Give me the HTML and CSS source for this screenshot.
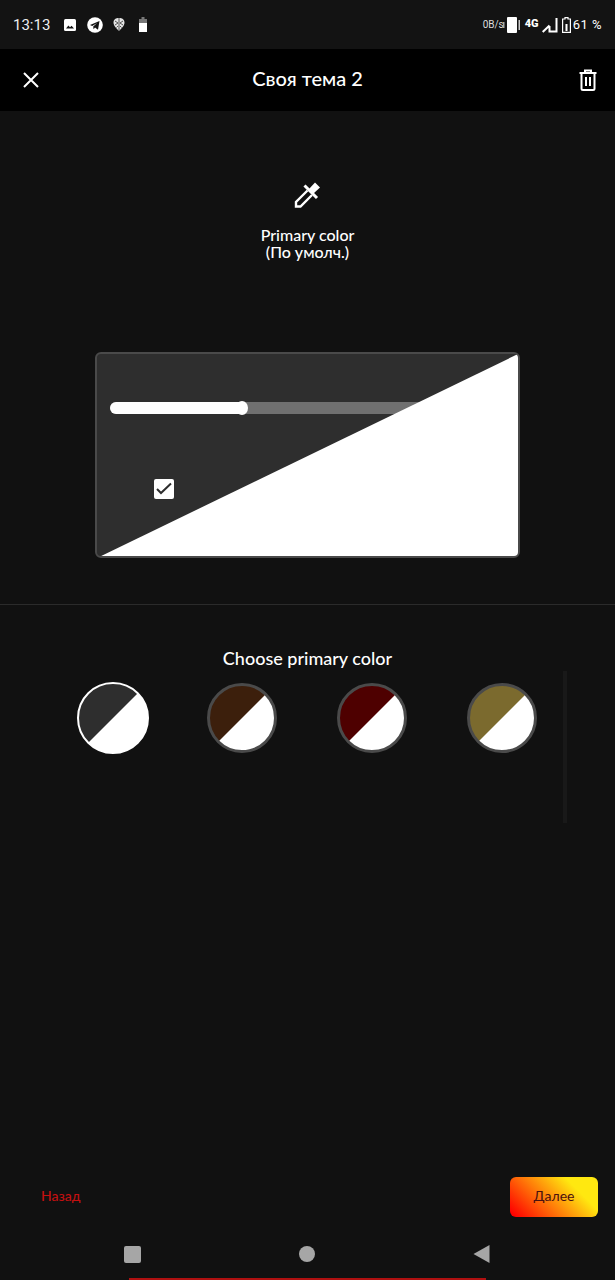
FILE: index.html
```html
<!DOCTYPE html>
<html lang="en">
<head>
  <meta charset="UTF-8" />
  <title>Своя тема 2</title>
  <meta name="viewport" content="width=device-width, initial-scale=1" />
  <link rel="stylesheet" href="styles.css">
</head>
<body>
  <div class="statusbar">
    <span class="clock">13:13</span>
    <div class="status-left">
      <svg width="14" height="14" viewBox="0 0 14 14"><rect x="1" y="1" width="12" height="12" rx="1.500" fill="#fff"/><path d="M3 10.500l2.400-3 1.600 1.800 1.600-1.600 2.400 2.800z" fill="#131313"/></svg>
      <svg width="16" height="16" viewBox="0 0 16 16"><circle cx="8" cy="8" r="7.800" fill="#fff"/><path d="M3 8l9.500-4-1.500 8.800-3-2.200-1.400 1.600-.4-2.800 4-3.400-5 3z" fill="#131313"/></svg>
      <svg width="12" height="15" viewBox="0 0 12 15"><path d="M6 1c3 0 5.500 1.400 5.500 4.500 0 3.500-3.500 6.500-5.500 8.500-2-2-5.500-5-5.500-8.500C.5 2.400 3 1 6 1z" fill="#e4e4e4"/><path d="M6 1v13M2 4l3 2-3 2M10 4L7 6l3 2M3.500 10.500L5 9M8.500 10.500L7 9" stroke="#444" stroke-width=".9" fill="none"/></svg>
      <svg class="batt-small" width="8" height="15" viewBox="0 0 8 15"><rect x="2.500" y="0" width="3" height="2" fill="#777"/><rect x="0" y="2" width="8" height="4" fill="#777"/><rect x="0" y="6" width="8" height="9" fill="#fff"/></svg>
    </div>
    <div class="status-right">
      <span class="speed">0B/s</span>
      <svg class="vibrate" width="19" height="16" viewBox="0 0 19 16"><rect x="5" y="0" width="10" height="16" rx="1" fill="#fff"/><rect x="1" y="5" width="1.500" height="6" fill="#aaa"/><rect x="16.500" y="3" width="1.500" height="10" fill="#ccc"/></svg>
      <span class="lte">4G</span>
      <svg class="signal" width="16" height="15" viewBox="0 0 16 15"><path d="M.7 14L7.500 7.500M14.500 0v13.500H7.500V8" stroke="#fff" stroke-width="2" fill="none"/></svg>
      <svg class="batt" width="9" height="16" viewBox="0 0 9 16"><path d="M3 .6h3v1.400h2.400v13.400H.6V2H3z" stroke="#fff" stroke-width="1.200" fill="none"/><rect x="3.500" y="7" width="2" height="7" fill="#fff"/></svg>
      <span class="battery">61 %</span>
    </div>
  </div>

  <header class="topbar">
    <svg class="icon" width="24" height="24" viewBox="0 0 24 24"><path d="M5 5l14 14M19 5L5 19" stroke="#fff" stroke-width="2" fill="none"/></svg>
    <h1>Своя тема 2</h1>
    <svg class="icon" width="24" height="24" viewBox="0 0 24 24"><path d="M3.500 5h17M9 5V2.500h6V5M5.500 5v15.500q0 1.500 1.500 1.500h10q1.500 0 1.500-1.500V5M10 9v9M14 9v9" stroke="#fff" stroke-width="2" fill="none"/></svg>
  </header>

  <section class="picker-head">
    <svg width="27" height="27" viewBox="0 0 27 27"><path d="M10.500 4.500L23 17" stroke="#fff" stroke-width="3" fill="none"/><path d="M15 8l6-6.500 5 5-6.500 6z" fill="#fff"/><path d="M13.500 9.500L2 21v4.500h4.500L18 14" stroke="#fff" stroke-width="2.400" fill="none"/></svg>
    <p>Primary color<br>(По умолч.)</p>
  </section>

  <section class="preview">
    <div class="slider"><div class="slider-fill"></div></div>
    <div class="check">
      <svg width="20" height="20" viewBox="0 0 20 20"><path d="M3 10l4 4 10-9.500" stroke="#2e2e2e" stroke-width="2" fill="none"/></svg>
    </div>
    <div class="triangle"></div>
  </section>

  <hr class="divider">

  <section class="colors">
    <h2>Choose primary color</h2>
    <div class="swatches">
      <div class="swatch selected grey"></div>
      <div class="swatch brown"></div>
      <div class="swatch red"></div>
      <div class="swatch olive"></div>
    </div>
    <div class="scrollbar"></div>
  </section>

  <footer class="actions">
    <button class="back">Назад</button>
    <button class="next">Далее</button>
  </footer>

  <nav class="navbar">
    <span class="nav-square"></span>
    <span class="nav-circle"></span>
    <svg width="17" height="18" viewBox="0 0 17 18"><path d="M16.500 0v18L.5 9z" fill="#a6a6a6"/></svg>
  </nav>
  <div class="redline"></div>
</body>
</html>
```

FILE: styles.css
```css
* {
  box-sizing: border-box;
}
html, body {
  height: 1280px;
  overflow: hidden;
}
body {
  margin: 0;
  width: 615px;
  background: #111;
  color: #fff;
  font-family: 'Lato', 'Noto Sans', sans-serif;
  position: relative;
}
.statusbar {
  height: 49px;
  background: #131313;
  display: flex;
  align-items: center;
  padding: 0 13px;
}
.clock {
  font-family: 'Roboto', sans-serif;
  font-size: 15px;
  color: #eee;
  width: 50px;
}
.status-left {
  display: flex;
  align-items: center;
  gap: 10px;
}
.batt-small {
  margin-left: 4px;
}
.status-right {
  margin-left: auto;
  display: flex;
  align-items: center;
  font-family: 'Roboto', sans-serif;
}
.speed {
  font-size: 10px;
  width: 19px;
  color: #ddd;
}
.vibrate {
  margin-right: 4px;
}
.lte {
  font-size: 11px;
  font-weight: 900;
  width: 17px;
  margin-top: -2px;
}
.signal {
  margin-top: 1px;
}
.batt {
  margin: 0 2px 0 4px;
}
.battery {
  font-size: 13px;
  letter-spacing: 0.5px;
  margin-top: -1px;
}
.topbar {
  height: 62px;
  background: #000;
  display: flex;
  align-items: center;
  justify-content: space-between;
  padding: 0 15px 0 19px;
}
.topbar h1 {
  margin: 0 4px 4px 0;
  font-size: 20px;
  font-weight: 500;
}
.picker-head {
  height: 241px;
  display: flex;
  flex-direction: column;
  align-items: center;
  padding-top: 70px;
}
.picker-head svg {
  margin-left: -1px;
}
.picker-head p {
  margin: 18px 0 0;
  font-size: 16px;
  line-height: 17px;
  text-align: center;
  font-weight: 500;
}
.preview {
  position: relative;
  width: 425px;
  height: 206px;
  margin: 0 auto 0 95px;
  background: #2e2e2e;
  border: 2px solid #4a4a4a;
  border-radius: 6px;
  padding: 48px 13px 0;
  overflow: hidden;
}
.slider {
  height: 12px;
  background: #707070;
  border-radius: 6px;
  width: 390px;
}
.slider-fill {
  position: relative;
  width: 132px;
  height: 12px;
  background: #fff;
  border-radius: 6px 0 0 6px;
}
.slider-fill::after {
  content: "";
  position: absolute;
  right: -6px;
  top: -1px;
  width: 12px;
  height: 14px;
  border-radius: 50%;
  background: #fff;
}
.check {
  width: 20px;
  height: 20px;
  margin: 65px 0 0 44px;
  background: #fff;
  border-radius: 2px;
}
.check svg {
  display: block;
}
.triangle {
  position: absolute;
  inset: 0;
  background: #fff;
  clip-path: polygon(100% 0, 100% 100%, 1% 100%);
}
.divider {
  margin: 46px 0 0;
  border: 0;
  height: 1px;
  background: #2b2b2b;
}
.colors {
  position: relative;
  padding-top: 43px;
}
.colors h2 {
  margin: 0;
  font-size: 18px;
  line-height: 20px;
  font-weight: 500;
  text-align: center;
}
.swatches {
  display: flex;
  align-items: center;
  gap: 60px;
  padding: 14px 0 0 77px;
}
.swatch {
  width: 70px;
  height: 70px;
  border-radius: 50%;
  border: 3px solid #4a4a4a;
}
.swatch.selected {
  width: 72px;
  height: 72px;
  margin-right: -2px;
  border: 2px solid #fff;
}
.grey { background: linear-gradient(135deg, #2e2e2e 49.700%, #fff 50.300%); }
.brown { background: linear-gradient(135deg, #3c1f0c 49.700%, #fff 50.300%); }
.red { background: linear-gradient(135deg, #4e0000 49.700%, #fff 50.300%); }
.olive { background: linear-gradient(135deg, #7b6a2e 49.700%, #fff 50.300%); }
.scrollbar {
  position: absolute;
  left: 563px;
  top: 66px;
  width: 4px;
  height: 152px;
  background: #191919;
}
.actions {
  position: absolute;
  left: 0;
  right: 0;
  top: 1177px;
  display: flex;
  justify-content: space-between;
  align-items: center;
  padding: 0 17px 0 41px;
}
.actions button {
  border: 0;
  font-family: inherit;
  font-size: 14px;
  line-height: 16px;
  cursor: pointer;
}
.back {
  background: none;
  color: #c41010;
  padding: 0 0 2px;
  font-weight: 500;
}
.next {
  width: 88px;
  height: 40px;
  padding: 0 0 2px;
  border-radius: 6px;
  color: #4a1010;
  background: linear-gradient(45deg, #ff0000 4%, #ffe810 74%);
}
.navbar {
  position: absolute;
  left: 124px;
  top: 1245px;
  width: 366px;
  display: flex;
  justify-content: space-between;
  align-items: center;
}
.nav-square {
  width: 17px;
  height: 17px;
  border-radius: 2px;
  background: #a6a6a6;
}
.nav-circle {
  width: 16px;
  height: 16px;
  border-radius: 50%;
  background: #a6a6a6;
}
.redline {
  position: absolute;
  left: 129px;
  top: 1278px;
  width: 357px;
  height: 2px;
  background: #b01010;
}
```
